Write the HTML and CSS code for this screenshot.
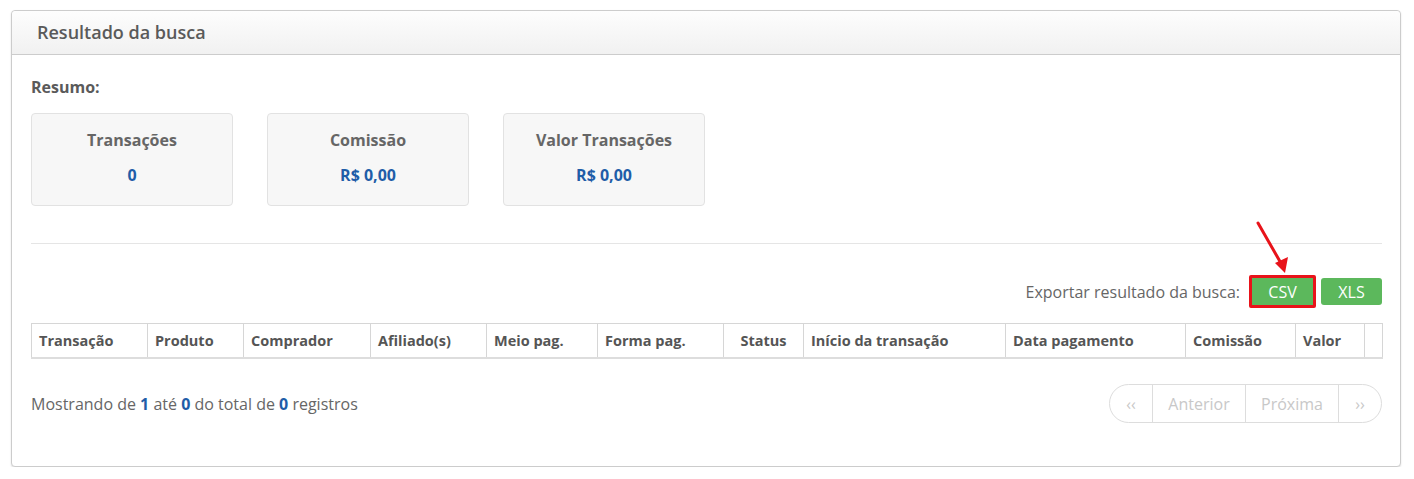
FILE: index.html
```html
<!DOCTYPE html>
<html lang="pt-BR">
<head>
    <meta charset="UTF-8">
    <title>Resultado da busca</title>
    <link rel="stylesheet" href="styles.css">
</head>
<body>
    <div class="panel">
        <div class="panel-heading">Resultado da busca</div>
        <div class="panel-body">
            <div class="summary-label">Resumo:</div>
            <div class="summary">
                <div class="summary-card">
                    <div class="summary-title">Transações</div>
                    <div class="summary-value">0</div>
                </div>
                <div class="summary-card">
                    <div class="summary-title">Comissão</div>
                    <div class="summary-value">R$ 0,00</div>
                </div>
                <div class="summary-card">
                    <div class="summary-title">Valor Transações</div>
                    <div class="summary-value">R$ 0,00</div>
                </div>
            </div>

            <hr class="divider">

            <div class="export">
                <span class="export-label">Exportar resultado da busca:</span>
                <span class="highlight"><button class="btn btn-success">CSV</button></span>
                <button class="btn btn-success">XLS</button>
                <svg class="arrow" width="40" height="60" viewBox="0 0 40 60">
                    <line x1="2" y1="2" x2="26" y2="44" stroke="#e8131a" stroke-width="3" stroke-linecap="round"/>
                    <polygon points="29,52 19,42 32,36" fill="#e8131a"/>
                </svg>
            </div>

            <table class="results">
                <colgroup>
                    <col style="width:116px"><col style="width:96px"><col style="width:127px">
                    <col style="width:116px"><col style="width:111px"><col style="width:126px">
                    <col style="width:80px"><col style="width:202px"><col style="width:180px">
                    <col style="width:110px"><col style="width:69px"><col style="width:18px">
                </colgroup>
                <thead>
                    <tr>
                        <th>Transação</th>
                        <th>Produto</th>
                        <th>Comprador</th>
                        <th>Afiliado(s)</th>
                        <th>Meio pag.</th>
                        <th>Forma pag.</th>
                        <th class="center">Status</th>
                        <th>Início da transação</th>
                        <th>Data pagamento</th>
                        <th>Comissão</th>
                        <th>Valor</th>
                        <th></th>
                    </tr>
                </thead>
            </table>

            <div class="table-footer">
                <div class="info">Mostrando de <b>1</b> até <b>0</b> do total de <b>0</b> registros</div>
                <ul class="pagination">
                    <li>&lsaquo;&lsaquo;</li>
                    <li>Anterior</li>
                    <li>Próxima</li>
                    <li>&rsaquo;&rsaquo;</li>
                </ul>
            </div>
        </div>
    </div>
</body>
</html>
```

FILE: styles.css
```css
html, body {
    margin: 0;
    background: #fff;
}
body {
    font-family: "Open Sans", "DejaVu Sans", sans-serif;
    color: #666;
    padding: 10px 13px 0 11px;
}
.panel {
    border: 1px solid #ccc;
    border-radius: 4px;
    box-shadow: 0 1px 2px rgba(0, 0, 0, 0.12);
    background: #fff;
}
.panel-heading {
    height: 43px;
    line-height: 43px;
    padding-left: 25px;
    font-size: 18px;
    font-weight: 600;
    color: #5a5a5a;
    background: linear-gradient(#fdfdfd, #f1f1f1);
    border-bottom: 1px solid #ccc;
    border-radius: 4px 4px 0 0;
}
.panel-body {
    position: relative;
    padding: 22px 18px 43px 19px;
}
.summary-label {
    font-size: 16px;
    font-weight: 700;
    line-height: 20px;
    color: #5a5a5a;
}
.summary {
    display: flex;
    gap: 34px;
    margin-top: 16px;
}
.summary-card {
    width: 200px;
    height: 91px;
    background: #f7f7f7;
    border: 1px solid #e2e2e2;
    border-radius: 4px;
    text-align: center;
}
.summary-title {
    margin-top: 16px;
    font-size: 16px;
    font-weight: 700;
    line-height: 20px;
    color: #666;
}
.summary-value {
    margin-top: 15px;
    font-size: 16px;
    font-weight: 700;
    line-height: 20px;
    color: #1f5da8;
}
.divider {
    border: none;
    border-top: 1px solid #e5e5e5;
    margin: 37px 0 0;
}
.export {
    position: relative;
    display: flex;
    justify-content: flex-end;
    align-items: center;
    margin-top: 31px;
    height: 33px;
}
.export-label {
    font-size: 16px;
    color: #666;
    margin-right: 9px;
}
.btn {
    font-family: inherit;
    font-size: 16px;
    color: #fff;
    border: none;
    border-radius: 3px;
    width: 61px;
    height: 27px;
    padding: 0;
    display: block;
}
.btn-success {
    background: #5cb85c;
}
.highlight {
    border: 3px solid #e8131a;
    border-radius: 2px;
    margin-right: 5px;
}
.highlight .btn {
    border-radius: 0;
}
.arrow {
    position: absolute;
    right: 86px;
    top: -54px;
}
.results {
    width: 1351px;
    table-layout: fixed;
    border-collapse: collapse;
    margin-top: 15px;
}
.results th {
    border: 1px solid #d6d6d6;
    border-bottom: 2px solid #ddd;
    height: 33px;
    padding: 0 7px;
    text-align: left;
    font-size: 14.5px;
    font-weight: 700;
    color: #555;
    white-space: nowrap;
}
.results th.center {
    text-align: center;
}
.table-footer {
    display: flex;
    justify-content: space-between;
    align-items: center;
    margin-top: 25px;
}
.info {
    font-size: 16px;
    color: #666;
}
.info b {
    color: #1f5da8;
    font-weight: 700;
}
.pagination {
    display: flex;
    list-style: none;
    margin: 0;
    padding: 0;
    border: 1px solid #ddd;
    border-radius: 20px;
    height: 37px;
}
.pagination li {
    display: flex;
    align-items: center;
    justify-content: center;
    font-size: 16px;
    color: #c8c8c8;
    border-left: 1px solid #ddd;
    width: 92px;
}
.pagination li:first-child,
.pagination li:last-child {
    width: 42px;
}
.pagination li:first-child {
    border-left: none;
}
```
